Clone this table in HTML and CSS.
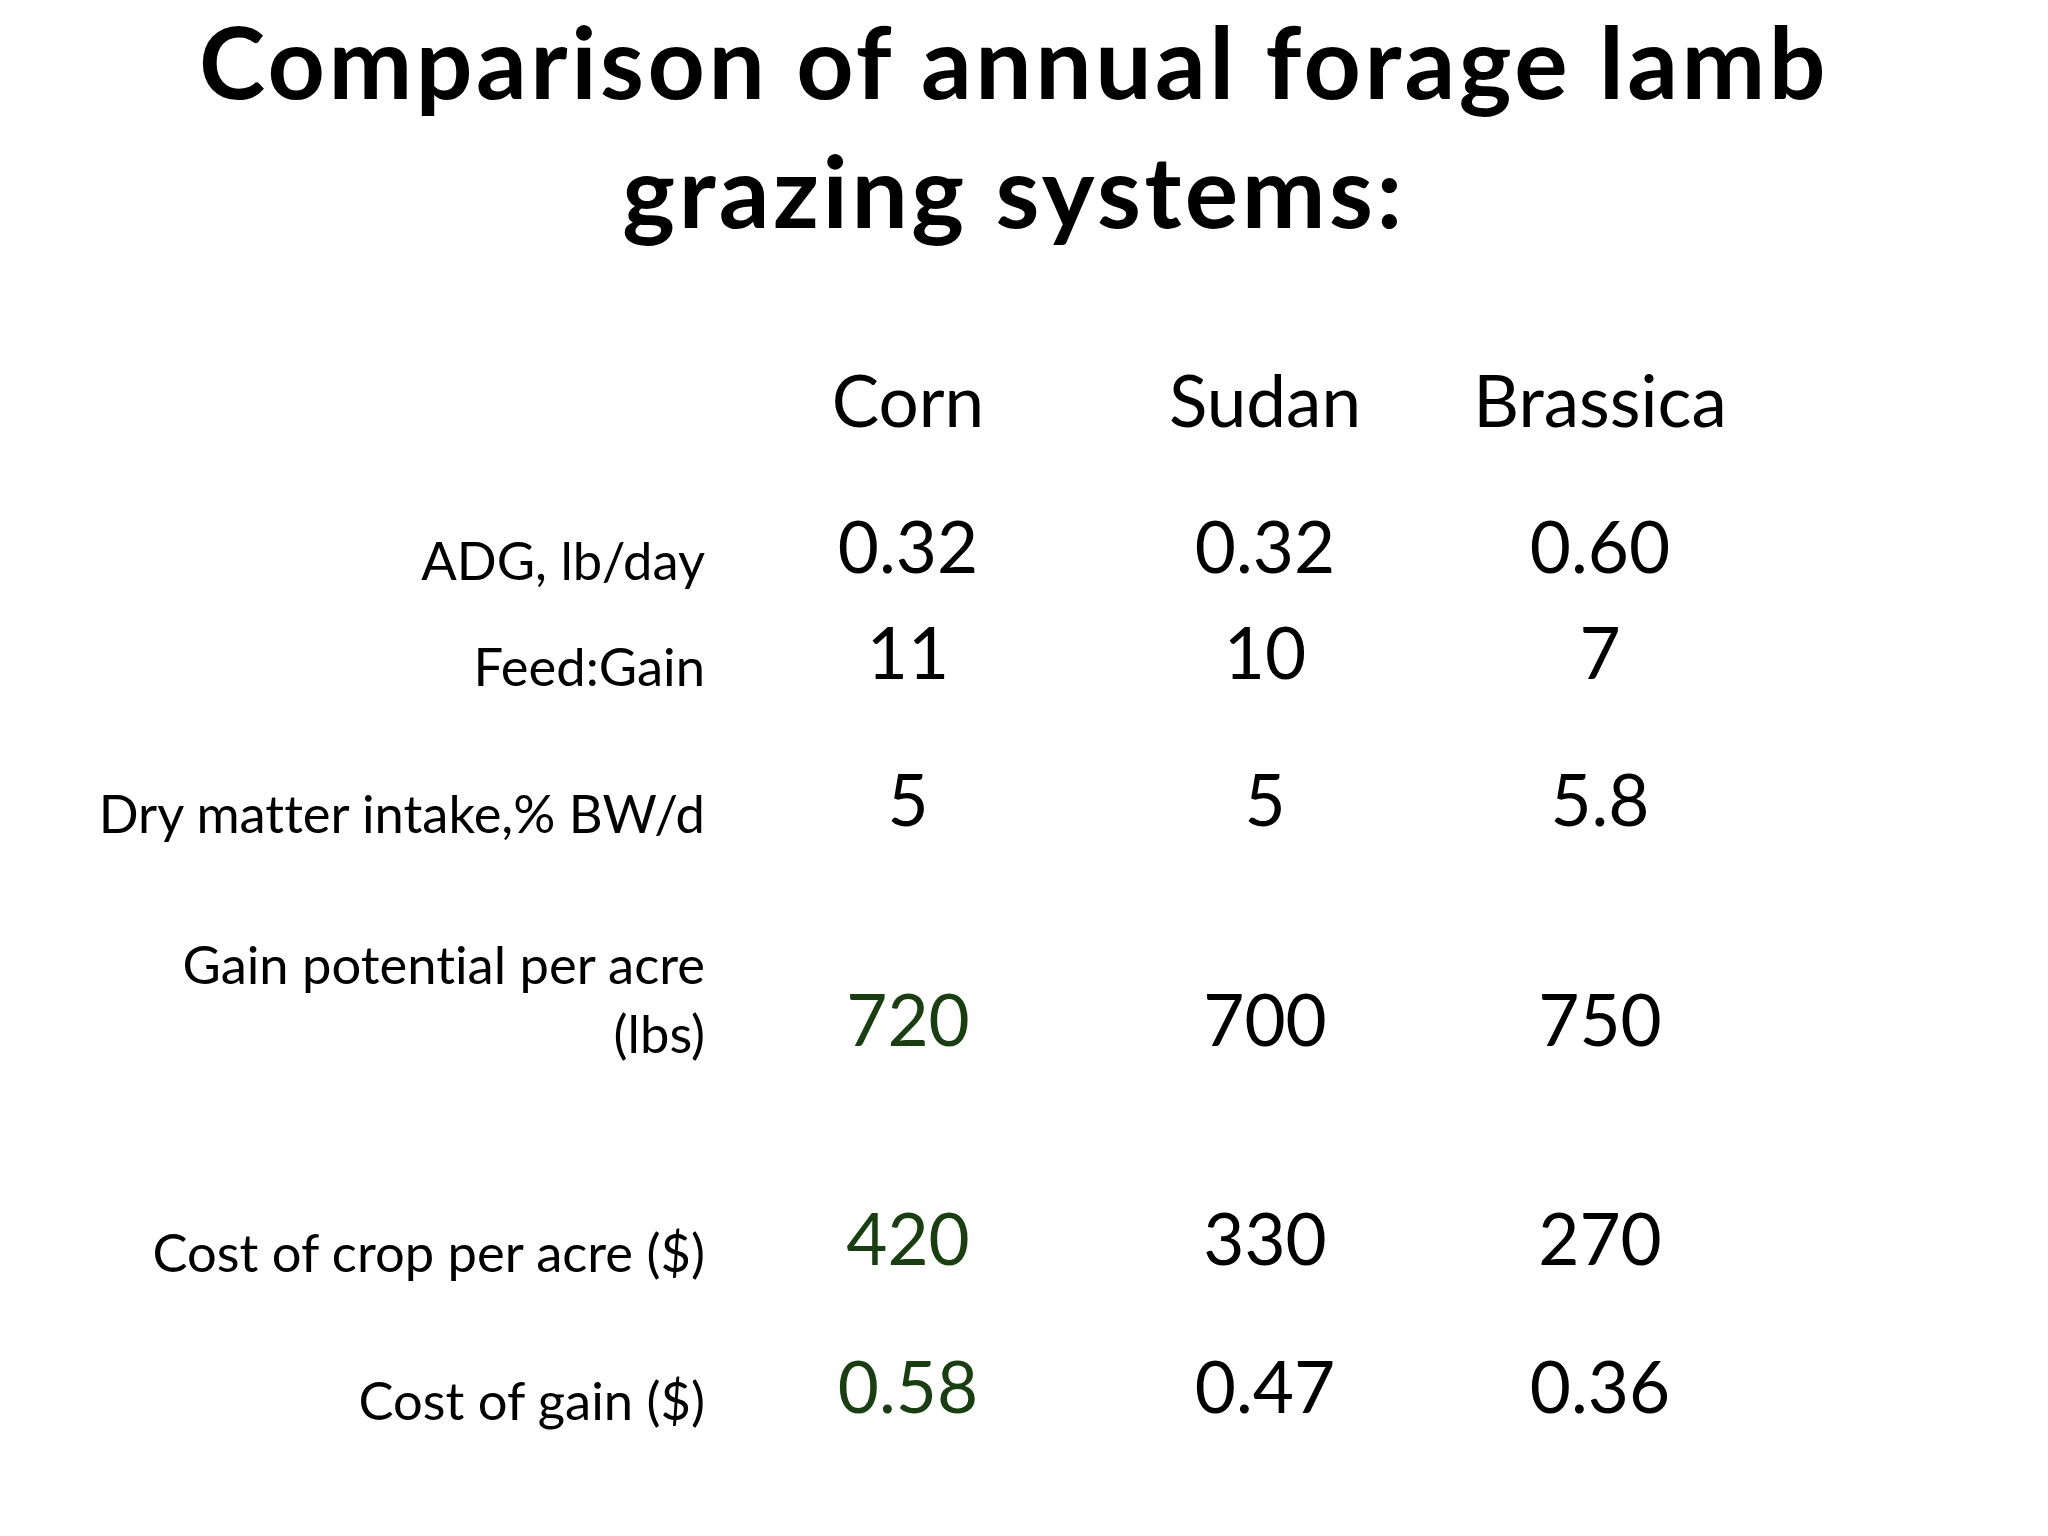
FILE: index.html
```html
<!DOCTYPE html>
<html lang="en">
<head>
<meta charset="utf-8">
<title>Comparison of annual forage lamb grazing systems</title>
<link rel="stylesheet" href="styles.css">
</head>
<body>
<main class="slide">
  <h1 class="title">
    <span class="title-line">Comparison of annual forage lamb</span>
    <span class="title-line">grazing systems:</span>
  </h1>
  <section class="table">
    <div class="label"></div>
    <div class="head">Corn</div>
    <div class="head">Sudan</div>
    <div class="head">Brassica</div>

    <div class="label">ADG, lb/day</div>
    <div class="val">0.32</div>
    <div class="val">0.32</div>
    <div class="val">0.60</div>

    <div class="label">Feed:Gain</div>
    <div class="val">11</div>
    <div class="val">10</div>
    <div class="val">7</div>

    <div class="label">Dry matter intake,% BW/d</div>
    <div class="val">5</div>
    <div class="val">5</div>
    <div class="val">5.8</div>

    <div class="label">Gain potential per acre<br>(lbs)</div>
    <div class="val green">720</div>
    <div class="val">700</div>
    <div class="val">750</div>

    <div class="label">Cost of crop per acre ($)</div>
    <div class="val green">420</div>
    <div class="val">330</div>
    <div class="val">270</div>

    <div class="label">Cost of gain ($)</div>
    <div class="val green">0.58</div>
    <div class="val">0.47</div>
    <div class="val">0.36</div>
  </section>
</main>
</body>
</html>
```

FILE: styles.css
```css
html, body {
  margin: 0;
  padding: 0;
  background: #ffffff;
}

body {
  width: 2048px;
  height: 1536px;
  overflow: hidden;
  font-family: "Lato", "Open Sans", "Noto Sans", sans-serif;
  font-variant-ligatures: none;
  color: #000000;
}

.slide {
  width: 2048px;
  height: 1536px;
  display: flex;
  flex-direction: column;
}

.title {
  margin: 0;
  padding: 10px 20px 0 0;
  display: flex;
  flex-direction: column;
  align-items: center;
  gap: 29px;
  font-size: 100px;
  font-weight: 700;
  letter-spacing: 3.5px;
  line-height: 100px;
}

.title-line {
  display: block;
  white-space: nowrap;
}

.table {
  display: grid;
  grid-template-columns: 705px 406px 308px 362px;
  grid-template-rows: 209px 146px 106px 147px 220px 219px 148px;
  align-items: end;
}

.label {
  font-size: 52.5px;
  line-height: 69px;
  text-align: right;
}

.head,
.val {
  font-size: 71px;
  line-height: 97px;
  text-align: center;
}

.green {
  color: #183f0f;
}
```
